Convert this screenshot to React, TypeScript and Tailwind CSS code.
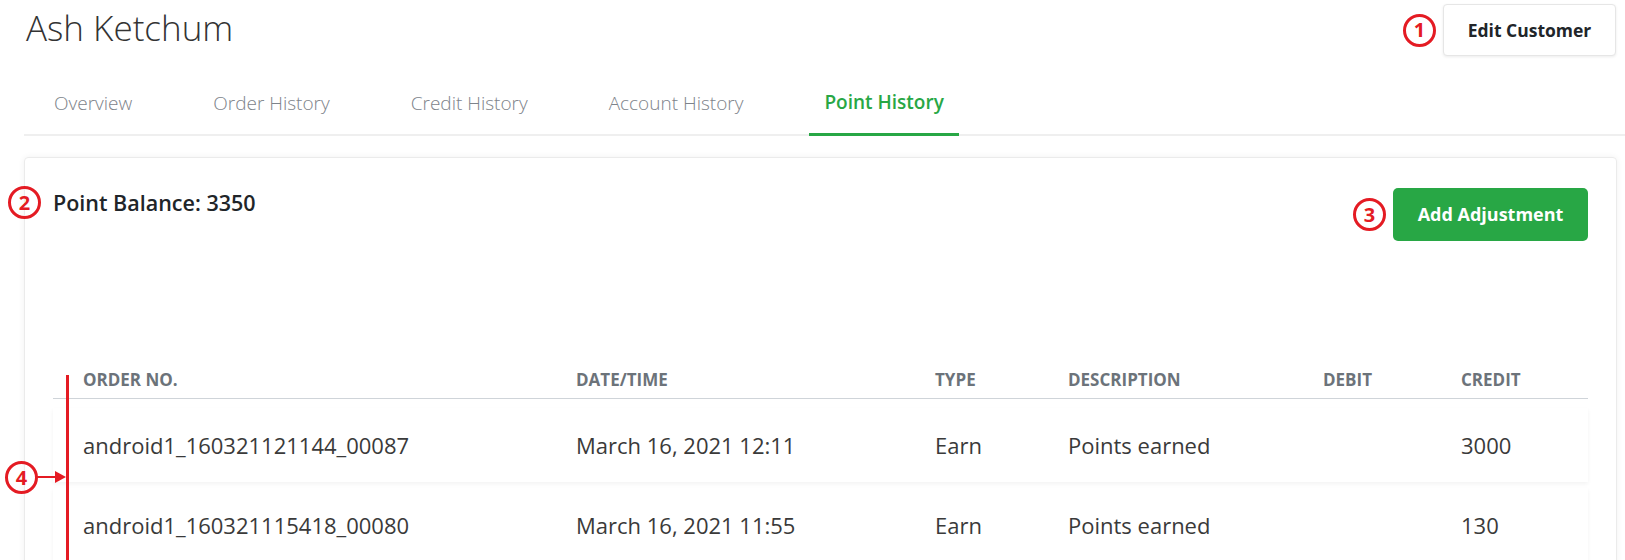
import { Fragment } from "react";

const tabs = ["Overview", "Order History", "Credit History", "Account History", "Point History"];

const columns = ["Order No.", "Date/Time", "Type", "Description", "Debit", "Credit"];

const rows = [
  { order: "android1_160321121144_00087", date: "March 16, 2021 12:11", type: "Earn", desc: "Points earned", debit: "", credit: "3000" },
  { order: "android1_160321115418_00080", date: "March 16, 2021 11:55", type: "Earn", desc: "Points earned", debit: "", credit: "130" },
];

const grid = "grid grid-cols-[523px_359px_133px_255px_138px_1fr]";

function Marker({ n }: { n: number }) {
  return (
    <div className="flex h-[33px] w-[33px] shrink-0 items-center justify-center rounded-full border-[3px] border-[#e41b23] text-[20px] font-bold leading-none text-[#e41b23]">
      {n}
    </div>
  );
}

export default function App() {
  return (
    <div className="relative h-[560px] w-[1625px] overflow-hidden bg-white font-['Open_Sans',sans-serif]">
      {/* Header */}
      <div className="flex items-start justify-between pl-[26px] pr-[9px] pt-[4px]">
        <h1 className="text-[35px] font-light leading-[48px] text-[#333]">Ash Ketchum</h1>
        <div className="flex items-center gap-[7px]">
          <Marker n={1} />
          <button className="h-[52px] w-[173px] rounded-[4px] border border-[#e6e6e6] bg-white text-[17.5px] font-bold text-[#212529] shadow-[0_1px_3px_rgba(0,0,0,0.08)]">
            Edit Customer
          </button>
        </div>
      </div>

      {/* Tabs */}
      <nav className="ml-[24px] mt-[16px] flex gap-[51px] border-b-2 border-[#efefef] pl-[15px]">
        {tabs.map((tab) =>
          tab === "Point History" ? (
            <div
              key={tab}
              className="-mb-[2px] flex h-[64px] items-center border-b-[3px] border-[#28a745] px-[15px] text-[19px] font-semibold text-[#28a745]"
            >
              {tab}
            </div>
          ) : (
            <div key={tab} className="flex h-[62px] items-center px-[15px] text-[19px] font-light text-[#7d838a]">
              {tab}
            </div>
          )
        )}
      </nav>

      {/* Card */}
      <div className="ml-[24px] mr-[8px] mt-[21px] h-[420px] rounded-[4px] border border-[#ebebeb] px-[28px] pt-[30px] shadow-[0_0_6px_rgba(0,0,0,0.06)]">
        <div className="flex items-start justify-between">
          <p className="mt-[1px] text-[21.5px] font-semibold leading-[28px] text-[#212529]">Point Balance: 3350</p>
          <div className="flex items-center gap-[7px]">
            <Marker n={3} />
            <button className="h-[53px] w-[195px] rounded-[5px] bg-[#28a745] text-[18px] font-bold text-white">
              Add Adjustment
            </button>
          </div>
        </div>

        {/* Table */}
        <div className="mt-[121px]">
          <div className={`${grid} h-[37px] items-center border-b border-[#cfd4d9] text-[17px] font-bold uppercase text-[#6c737a]`}>
            {columns.map((c, i) => (
              <div key={c} className={i === 0 ? "pl-[30px]" : ""}>
                {c}
              </div>
            ))}
          </div>
          <div className="mt-[9px] flex flex-col gap-[6px]">
            {rows.map((r) => (
              <div
                key={r.order}
                className={`${grid} h-[74px] items-center bg-white text-[22px] text-[#3a3a3a] shadow-[0_2px_4px_rgba(0,0,0,0.05)]`}
              >
                <Fragment>
                  <div className="pl-[30px]">{r.order}</div>
                  <div>{r.date}</div>
                  <div>{r.type}</div>
                  <div>{r.desc}</div>
                  <div>{r.debit}</div>
                  <div>{r.credit}</div>
                </Fragment>
              </div>
            ))}
          </div>
        </div>
      </div>

      {/* Annotations */}
      <div className="absolute left-[8px] top-[186px]">
        <Marker n={2} />
      </div>
      <div className="absolute left-[5px] top-[461px]">
        <Marker n={4} />
      </div>
      <div className="absolute left-[66px] top-[375px] h-[190px] w-[3px] bg-[#e41b23]" />
      <svg className="absolute left-[37px] top-[470px]" width="30" height="14" viewBox="0 0 30 14">
        <line x1="0" y1="7" x2="20" y2="7" stroke="#e41b23" strokeWidth="2" />
        <polygon points="18,1 29,7 18,13" fill="#e41b23" />
      </svg>
    </div>
  );
}
